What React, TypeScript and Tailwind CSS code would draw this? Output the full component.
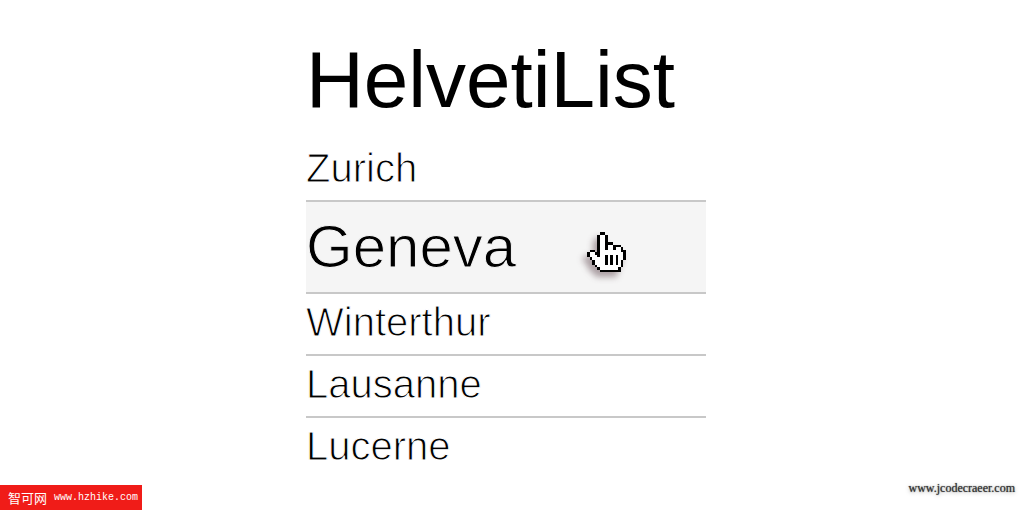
import { clsx } from "clsx";

const cities = [
  { name: "Zurich" },
  { name: "Geneva", active: true },
  { name: "Winterthur" },
  { name: "Lausanne" },
  { name: "Lucerne" },
];

// X = outline, o = fill
const handRows = [
  ".....XX........",
  "....XooX.......",
  "....XooX.......",
  "....XooX.......",
  "....XooXXX.....",
  "....XooXooXXX..",
  "....XooXooXooX.",
  ".XX.XooooooooXX",
  "XooXXoooooooooX",
  "XoooXooXoXoXooX",
  ".XoooooXoXoXooX",
  "..XooooXoXoXoX.",
  "..XooooXoXoXoX.",
  "...XoooooooooX.",
  "....XoooooooX..",
  ".....XXXXXXXX..",
];

function HandCursor({ className }: { className?: string }) {
  return (
    <svg
      viewBox="0 0 15 16"
      preserveAspectRatio="none"
      shapeRendering="crispEdges"
      aria-hidden="true"
      className={className}
    >
      {handRows.flatMap((row, y) =>
        row.split("").map((cell, x) =>
          cell === "." ? null : (
            <rect
              key={`${x}-${y}`}
              x={x}
              y={y}
              width="1"
              height="1"
              fill={cell === "X" ? "#000" : "#fff"}
            />
          )
        )
      )}
    </svg>
  );
}

export default function App() {
  return (
    <div className="flex min-h-screen flex-col bg-white font-['Liberation_Sans',Arial,sans-serif] text-black">
      {/* List */}
      <main className="flex grow justify-center pt-10 pr-2">
        <div className="w-full max-w-[400px]">
          <h1 className="mb-5 text-[80px] leading-20">HelvetiList</h1>
          <ul className="divide-y-2 divide-[#c8c8c8]">
            {cities.map((city) => (
              <li
                key={city.name}
                className={clsx(
                  city.active
                    ? "relative bg-[#f5f5f5] text-6xl leading-[90px] [-webkit-text-stroke:1px_#f5f5f5]"
                    : "pb-1 text-[40px] leading-14 [-webkit-text-stroke:1px_white]"
                )}
              >
                {city.name}
                {city.active && (
                  <HandCursor className="absolute top-[30px] right-20 h-10 w-[39px] drop-shadow-[-4px_5px_3px_rgba(60,30,40,0.4)]" />
                )}
              </li>
            ))}
          </ul>
        </div>
      </main>

      {/* Site marks */}
      <footer className="flex h-8 items-end justify-between">
        <a
          href="#hzhike"
          className="flex h-[25px] items-center gap-[7px] bg-[#f01c18] pr-1 pl-2 text-white"
        >
          <span className="font-['Noto_Sans_CJK_SC',sans-serif] text-[13px] leading-4">
            智可网
          </span>
          <span className="font-['Liberation_Mono',monospace] text-[10px] leading-4">
            www.hzhike.com
          </span>
        </a>
        <a
          href="#jcodecraeer"
          className="self-start pr-[5px] font-['Liberation_Serif',serif] text-xs leading-5 text-[#333] [text-shadow:0_0_1px_#555,0_1px_4px_#aaa]"
        >
          www.jcodecraeer.com
        </a>
      </footer>
    </div>
  );
}
